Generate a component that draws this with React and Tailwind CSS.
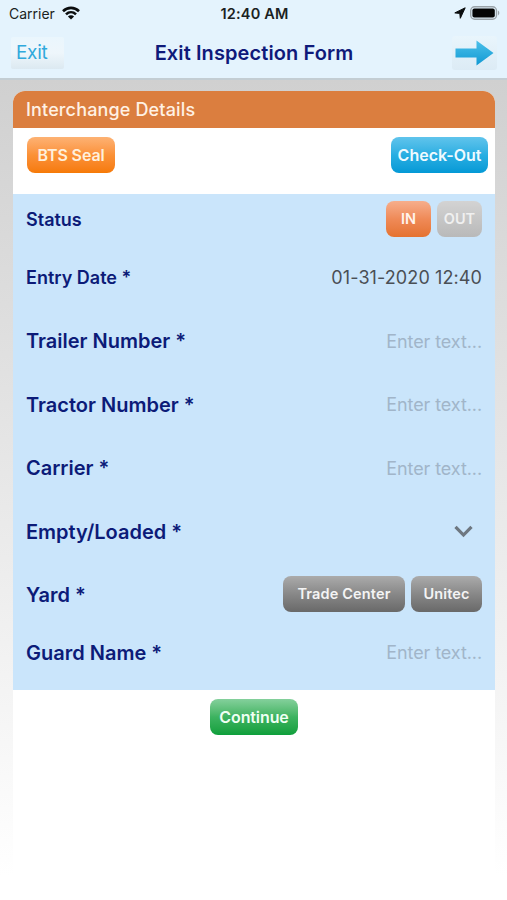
import { clsx } from 'clsx'

const BUTTON_STYLE = {
  seal    : 'w-[88px] text-[16px] tracking-[-0.1px] from-[#fdb273] via-[#fb9136] to-[#f67a05] text-[#fff0dc]',
  checkout: 'w-[97px] text-[16px] from-[#5fc4ec] via-[#27aee2] to-[#0299d6] text-[#effaff]',
  active  : 'w-[45px] text-[14.5px] from-[#f6ae8c] via-[#ef8a57] to-[#e5722f] text-[#fff3ec]',
  inactive: 'w-[45px] text-[14.5px] from-[#d3d3d3] via-[#c6c6c6] to-[#b9b9b9] text-[#f0f0f0]',
  yard    : 'text-[14.5px] tracking-[0.15px] from-[#ababab] via-[#888888] to-[#696969] text-[#f4f4f4]',
  next    : 'w-[88px] text-[16px] tracking-[-0.1px] from-[#84d09c] via-[#3cb360] to-[#0c9f3b] text-[#effff3]',
}

export default function App() {
  return (
    <div className="w-[507px] h-[900px] overflow-hidden flex flex-col bg-white font-['Inter','Liberation_Sans',sans-serif]">
      <header className="h-[80px] shrink-0 bg-[#e4f3fd] border-b-2 border-[#c3cdd3]">
        <StatusBar />
        <NavBar />
      </header>
      <main className="flex-1 bg-linear-to-b from-[#d0d0d0] to-white to-97% pl-[13px] pr-[12px] pt-[11px]">
        <div className="h-full bg-white rounded-t-[12px] overflow-hidden">
          <h2 className="h-[37px] bg-[#db7e3f] px-[13px] flex items-center text-[18px] tracking-[0.15px] font-medium text-[#fff1e4]">
            Interchange Details
          </h2>
          <div className="h-[66px] pt-[9px] pl-[14px] pr-[7px] flex items-start justify-between">
            <Button kind="seal">BTS Seal</Button>
            <Button kind="checkout">Check-Out</Button>
          </div>
          <Fields />
          <div className="flex justify-center pt-[9px]">
            <Button kind="next">Continue</Button>
          </div>
        </div>
      </main>
    </div>
  )
}

function StatusBar() {
  return (
    <div className="h-[27px] grid grid-cols-3 items-center pl-[9px] pr-[7px] text-[#1b1f22]">
      <div className="flex items-center gap-[7px]">
        <span className="text-[14px]">Carrier</span>
        <svg className="-mt-px" width="18" height="14" viewBox="0 0 18 14" fill="none" stroke="#0b0d0e" strokeWidth="2.6">
          <path d="M1 5.2C5.6.7 12.4.7 17 5.2" />
          <path d="M4 8.4c2.9-2.8 7.1-2.8 10 0" />
          <path d="M9 13.6 5.9 10.5a4.4 4.4 0 0 1 6.2 0Z" fill="#0b0d0e" stroke="none" />
        </svg>
      </div>
      <span className="text-center text-[14.5px] tracking-[0.2px] font-semibold whitespace-nowrap">12:40 AM</span>
      <div className="flex items-center justify-end gap-[4px]">
        <svg className="-mt-px" width="12" height="12" viewBox="0 0 12 12">
          <path d="M11.2.8.8 5.9l5 .5.5 4.9Z" fill="#0b0d0e" stroke="#0b0d0e" strokeWidth="1" strokeLinejoin="round" />
        </svg>
        <svg className="-mt-px" width="30" height="14" viewBox="0 0 30 14">
          <rect x=".7" y=".7" width="25.8" height="12.6" rx="4" fill="none" stroke="#9aa3a9" strokeWidth="1.4" />
          <rect x="2.4" y="2.4" width="22.4" height="9.2" rx="2" fill="#050505" />
          <path d="M28 4.6c1.8.9 1.8 3.9 0 4.8Z" fill="#9aa3a9" />
        </svg>
      </div>
    </div>
  )
}

function NavBar() {
  return (
    <div className="h-[51px] grid grid-cols-[60px_1fr_60px] items-center pl-[11px] pr-[10px]">
      <button className="w-[53px] h-[32px] pl-[5px] rounded-[2px] text-left text-[19px] leading-[30px] tracking-[-0.3px] text-[#30a9dc] bg-linear-to-b from-[#eaf6fd] via-[#eef6fb] to-[#dce9f1]">
        Exit
      </button>
      <h1 className="text-center text-[20px] tracking-[0.1px] font-semibold text-[#0f1a7a] whitespace-nowrap">Exit Inspection Form</h1>
      <button className="w-[45px] h-[34px] justify-self-end rounded-[3px] flex items-center justify-center bg-linear-to-b from-[#e9f5fc] to-[#dcebf5]">
        <svg width="39" height="26" viewBox="0 0 39 26">
          <defs>
            <linearGradient id="arrow" x1="0" y1="0" x2="0" y2="1">
              <stop offset="0" stopColor="#4cc0ea" />
              <stop offset="1" stopColor="#1199d3" />
            </linearGradient>
          </defs>
          <path d="M.5 8.5h21V.5L38.5 13 21.5 25.5v-8h-21Z" fill="url(#arrow)" />
        </svg>
      </button>
    </div>
  )
}

function Fields() {
  return (
    <div className="h-[496px] bg-[#cae5fb] px-[13px]">
      <Row label="Status" className="h-[51px]" labelClass="text-[18px]">
        <div className="flex gap-[6px] -mt-px">
          <Button kind="active">IN</Button>
          <Button kind="inactive">OUT</Button>
        </div>
      </Row>
      <Row label="Entry Date *" className="h-[64px]" labelClass="text-[18px]">
        <span className="text-[18px] tracking-[0.1px] text-[#4a4f55]">01-31-2020 12:40</span>
      </Row>
      <Row label="Trailer Number *" className="h-[64px]"><Placeholder /></Row>
      <Row label="Tractor Number *" className="h-[63px]"><Placeholder /></Row>
      <Row label="Carrier *" className="h-[64px]"><Placeholder /></Row>
      <Row label="Empty/Loaded *" className="h-[63px]">
        <svg className="mr-[9px]" width="19" height="13" viewBox="0 0 19 13" fill="none" stroke="#6e7780" strokeWidth="3.2">
          <path d="M1.5 1.8 9.5 10l8-8.2" />
        </svg>
      </Row>
      <Row label="Yard *" className="h-[64px]">
        <div className="flex gap-[6px] -mt-[3px]">
          <Button kind="yard" className="w-[122px]">Trade Center</Button>
          <Button kind="yard" className="w-[71px]">Unitec</Button>
        </div>
      </Row>
      <Row label="Guard Name *" className="h-[51px]"><Placeholder /></Row>
    </div>
  )
}

function Row({ label, className, labelClass = 'text-[20px]', children }) {
  return (
    <div className={clsx('flex items-center justify-between', className)}>
      <span className={clsx('font-semibold text-[#0c1b78] whitespace-nowrap', labelClass)}>{label}</span>
      {children}
    </div>
  )
}

function Placeholder() {
  return <span className="text-[18px] tracking-[-0.1px] text-[#a1b5c9]">Enter text...</span>
}

function Button({ kind, className, children }) {
  return (
    <button className={clsx(
      'h-[36px] rounded-[8px] shrink-0 font-semibold whitespace-nowrap bg-linear-to-b text-center',
      BUTTON_STYLE[kind],
      className
    )}>
      {children}
    </button>
  )
}
